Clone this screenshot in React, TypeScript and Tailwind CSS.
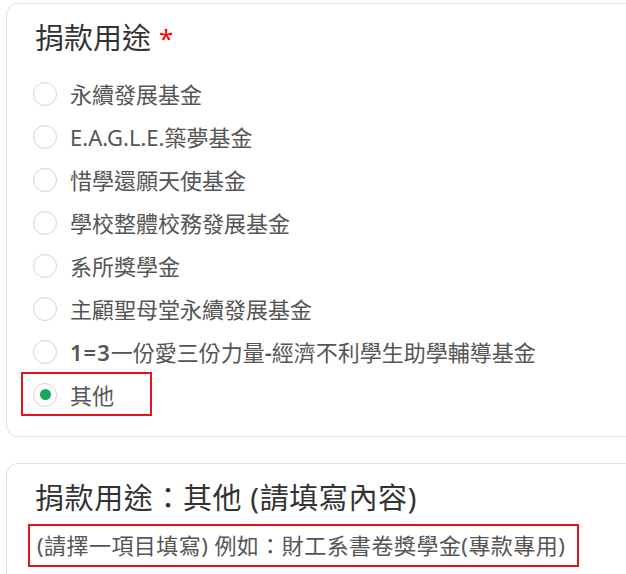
import React from "react";

const options: React.ReactNode[] = [
  "永續發展基金",
  "E.A.G.L.E.築夢基金",
  "惜學還願天使基金",
  "學校整體校務發展基金",
  "系所獎學金",
  "主顧聖母堂永續發展基金",
  <>
    <span className="font-semibold tracking-[1px]">1=3</span>一份愛三份力量<span className="font-semibold">-</span>經濟不利學生助學輔導基金
  </>,
  "其他",
];

export default function App() {
  return (
    <div
      className="w-[626px] h-[574px] overflow-hidden bg-white pl-[6px] pt-[3px]"
      style={{ fontFamily: '"Noto Sans", "Noto Sans CJK TC", sans-serif' }}
    >
      <div className="w-[680px] border border-[#e2e2e2] rounded-[12px] pt-[18px] pb-[20px] pl-[26px]">
        <div className="pl-[2px] text-[29px] leading-[32px] text-[#333] flex items-start">
          <span>捐款用途</span>
          <span className="ml-[8px] text-[#f00] text-[26px]">*</span>
        </div>
        <div className="mt-[18px] flex flex-col">
          {options.map((o, i) => {
            const checked = i === options.length - 1;
            return (
              <div key={i} className="relative h-[43px] flex items-center">
                <div className="w-[24px] h-[24px] rounded-full border border-[#d4d4d4] flex items-center justify-center bg-white">
                  {checked && <div className="w-[11px] h-[11px] rounded-full bg-[#13a85a]" />}
                </div>
                <span className="ml-[13px] text-[22px] leading-[30px] text-[#555]">{o}</span>
                {checked && (
                  <div className="absolute -left-[12px] -top-[1px] w-[131px] h-[44px] border-2 border-[#e3141b]" />
                )}
              </div>
            );
          })}
        </div>
      </div>
      <div className="mt-[26px] w-[680px] h-[200px] border border-[#e2e2e2] rounded-[12px] pt-[18px] pl-[26px]">
        <div className="pl-[2px] text-[29px] leading-[32px] text-[#333] tracking-[0.6px]">捐款用途：其他 (請填寫內容)</div>
        <div className="mt-[10px] -ml-[5px] inline-block border-2 border-[#e3141b] pl-[7px] pr-[12px] text-[22px] leading-[39px] text-[#555] tracking-[0.45px]">
          (請擇一項目填寫) 例如：財工系書卷獎學金(專款專用)
        </div>
      </div>
    </div>
  );
}
